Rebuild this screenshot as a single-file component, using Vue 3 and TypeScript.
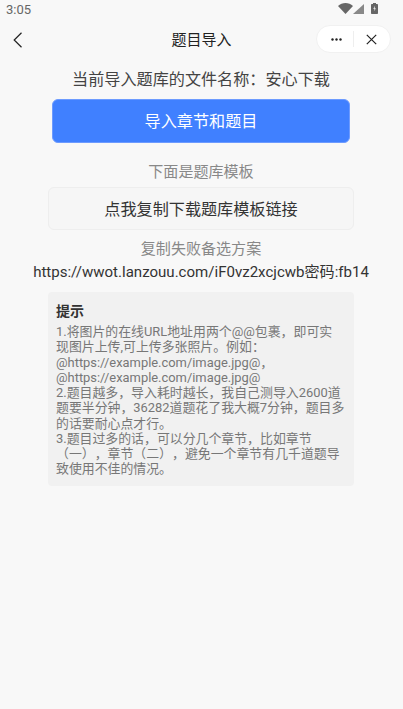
<script setup lang="ts">
const tips: string = `1.将图片的在线URL地址用两个@@包裹，即可实
现图片上传,可上传多张照片。例如：
@https://example.com/image.jpg@，
@https://example.com/image.jpg@
2.题目越多，导入耗时越长，我自己测导入2600道题要半分钟，36282道题花了我大概7分钟，题目多的话要耐心点才行。
3.题目过多的话，可以分几个章节，比如章节（一），章节（二），避免一个章节有几千道题导致使用不佳的情况。`
</script>

<template>
  <div class="page">
    <div class="status">
      <span class="time">3:05</span>
      <div class="status-icons">
        <svg width="15" height="11" viewBox="0 0 15 11"><path d="M0 3C2 1 4.800 0 7.500 0s5.500 1 7.500 3L7.500 11z" fill="#666" /></svg>
        <svg width="11" height="10" viewBox="0 0 11 10"><path d="M11 0v10H0z" fill="#888" /></svg>
        <svg class="batt" width="7" height="11" viewBox="0 0 7 11"><path d="M2 0h3v1h1.200a.8.8 0 0 1 .8.8v8.400a.8.8 0 0 1-.8.8H.8a.8.800 0 0 1-.8-.8V1.800A.8.800 0 0 1 .8 1H2z" fill="#666" /><path d="M3.900 2.800 2.300 6h1.100v2.300L4.800 5.200H3.700z" fill="#eee" /></svg>
      </div>
    </div>
    <div class="nav">
      <svg class="back" width="10" height="16" viewBox="0 0 10 16"><path d="M8.500 .8 1.200 8l7.300 7.200" fill="none" stroke="#222" stroke-width="1.200" /></svg>
      <span class="nav-title">题目导入</span>
      <div class="capsule">
        <svg class="dots" width="11" height="3" viewBox="0 0 11 3"><circle cx="1.500" cy="1.500" r="1.200" fill="#222" /><circle cx="5.500" cy="1.500" r="1.200" fill="#222" /><circle cx="9.500" cy="1.500" r="1.200" fill="#222" /></svg>
        <span class="cap-line"></span>
        <svg class="close" width="11" height="11" viewBox="0 0 11 11"><path d="M.8.8l9.400 9.400M10.200.8.8 10.200" fill="none" stroke="#222" stroke-width="1.200" /></svg>
      </div>
    </div>
    <main class="content">
      <p class="file">当前导入题库的文件名称：安心下载</p>
      <button class="primary">导入章节和题目</button>
      <p class="sub first">下面是题库模板</p>
      <button class="plain">点我复制下载题库模板链接</button>
      <p class="sub second">复制失败备选方案</p>
      <p class="url">https://wwot.lanzouu.com/iF0vz2xcjcwb密码:fb14</p>
      <section class="tip">
        <h3>提示</h3>
        <p>{{ tips }}</p>
      </section>
    </main>
  </div>
</template>

<style scoped>
.page {
  width: 403px;
  height: 709px;
  overflow: hidden;
  background: #f8f8f8;
  font-family: Roboto, "Noto Sans CJK SC", sans-serif;
  color: #333;
  text-spacing-trim: space-all;
}
.status {
  height: 24px;
  box-sizing: border-box;
  padding: 0 25px 0 6px;
  display: flex;
  justify-content: space-between;
  align-items: flex-start;
}
.time { font-size: 13px; line-height: 19px; color: #666; }
.status-icons { display: flex; align-items: flex-end; height: 14px; }
.batt { margin-left: 7px; }
.nav {
  height: 32px;
  box-sizing: border-box;
  padding-bottom: 3px;
  position: relative;
  display: flex;
  align-items: center;
  justify-content: center;
}
.back { position: absolute; left: 13px; top: 8px; }
.nav-title { font-size: 15px; color: #222; }
.capsule {
  position: absolute;
  left: 316px;
  top: 1px;
  width: 75px;
  height: 28px;
  box-sizing: border-box;
  border-radius: 14px;
  background: #fff;
  border: 1px solid #f1f1f1;
  display: flex;
  align-items: center;
}
.dots { margin-left: 14px; }
.cap-line { width: 1px; height: 16px; background: #eee; margin-left: 11px; }
.close { margin-left: 12px; }
.content {
  width: 402px;
  display: flex;
  flex-direction: column;
  align-items: center;
}
p, h3 { margin: 0; }
.file { margin-top: 13px; font-size: 16.12px; line-height: 22px; color: #444; }
.primary {
  margin-top: 8px;
  width: 298px;
  height: 44px;
  padding: 0 0 3px;
  border: 1px solid #6d9bff;
  border-radius: 6px;
  background: #4080ff;
  color: #fff;
  font: inherit;
  font-size: 16.12px;
}
.sub { font-size: 15.05px; line-height: 20px; color: #888; }
.first { margin-top: 19px; }
.plain {
  margin-top: 5px;
  width: 306px;
  height: 43px;
  padding: 0 0 2px;
  box-sizing: border-box;
  border: 1px solid #eeeeee;
  border-radius: 6px;
  background: #f6f6f6;
  color: #333;
  font: inherit;
  font-size: 16.12px;
}
.second { margin-top: 9px; }
.url { margin-top: 3px; font-size: 15.05px; line-height: 20px; color: #333; white-space: nowrap; }
.tip {
  margin-top: 10px;
  width: 306px;
  height: 194px;
  box-sizing: border-box;
  padding: 10px 8px;
  border-radius: 4px;
  background: #f1f1f1;
}
.tip h3 { font-size: 14px; line-height: 19px; font-weight: 700; color: #333; }
.tip p {
  margin-top: 3px;
  font-size: 12.9px;
  line-height: 15.26px;
  color: #777;
  white-space: pre-line;
}
</style>
